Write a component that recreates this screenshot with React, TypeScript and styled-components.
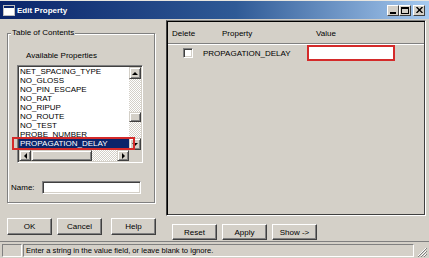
import React from "react";
import styled, { createGlobalStyle } from "styled-components";

const GlobalStyle = createGlobalStyle`
  html, body { margin: 0; padding: 0; background: #d4d0c8; }
  body {
    font-family: "Liberation Sans", Arial, sans-serif;
    font-size: 8px;
    color: #000;
  }
`;

const Window = styled.div`
  width: 429px;
  height: 258px;
  display: flex;
  flex-direction: column;
  background: #d4d0c8;
  overflow: hidden;
`;

const TitleBar = styled.div`
  height: 19px;
  box-sizing: border-box;
  display: flex;
  align-items: center;
  padding: 0 3px 0 3px;
  border-top: 1px solid #e8e6e0;
  background: linear-gradient(to right, #0a246a 0%, #2f5a96 55%, #a6caf0 100%);
`;

const TitleText = styled.span`
  flex: 1;
  margin-left: 2px;
  color: #fff;
  font-weight: bold;
  font-size: 8px;
`;

const CaptionButtons = styled.div`
  display: flex;
  margin-right: 1px;
`;

const CaptionButton = styled.div<{ $gap?: boolean }>`
  width: 12px;
  height: 11px;
  margin-left: ${(p) => (p.$gap ? "2px" : "0")};
  box-sizing: border-box;
  background: #d4d0c8;
  border-top: 1px solid #fff;
  border-left: 1px solid #fff;
  border-right: 1px solid #404040;
  border-bottom: 1px solid #404040;
  display: flex;
  align-items: center;
  justify-content: center;
`;

const Body = styled.div`
  height: 222px;
  display: flex;
`;

const LeftPane = styled.div`
  width: 166px;
  box-sizing: border-box;
  padding: 9px 0 0 7px;
  display: flex;
  flex-direction: column;
`;

const GroupBox = styled.fieldset`
  margin: 0;
  padding: 0;
  width: 148px;
  height: 175px;
  box-sizing: border-box;
  border: 1px solid #808080;
  box-shadow: inset 1px 1px 0 #fff, 1px 1px 0 #fff;
  min-inline-size: 0;
`;

const GroupTitle = styled.legend`
  margin-left: 3px;
  padding: 0 1px;
  line-height: 10px;
  background: #d4d0c8;
`;

const SmallLabel = styled.div<{ $indent: number; $top: number }>`
  margin-top: ${(p) => p.$top}px;
  padding-left: ${(p) => p.$indent}px;
  line-height: 10px;
`;

const ListWrap = styled.div`
  position: relative;
  margin: 4px 0 0 9px;
  width: 126px;
  height: 98px;
`;

const ListBox = styled.div`
  width: 100%;
  height: 100%;
  box-sizing: border-box;
  border-top: 1px solid #808080;
  border-left: 1px solid #808080;
  border-right: 1px solid #fff;
  border-bottom: 1px solid #fff;
  display: grid;
  grid-template-columns: 1fr 12px;
  grid-template-rows: 1fr 11px;
  box-shadow: inset 1px 1px 0 #404040, inset -1px -1px 0 #d4d0c8;
  padding: 1px;
`;

const Items = styled.div`
  background: #fff;
  overflow: hidden;
`;

const Item = styled.div<{ $selected?: boolean }>`
  height: 9px;
  line-height: 9px;
  padding-left: 1px;
  white-space: nowrap;
  background: ${(p) => (p.$selected ? "#0a246a" : "transparent")};
  color: ${(p) => (p.$selected ? "#fff" : "#000")};
`;

const ScrollV = styled.div`
  display: flex;
  flex-direction: column;
  background: repeating-conic-gradient(#fff 0 25%, #d4d0c8 0 50%) 0 0 / 2px 2px;
`;

const ScrollH = styled.div`
  display: flex;
  background: repeating-conic-gradient(#fff 0 25%, #d4d0c8 0 50%) 0 0 / 2px 2px;
`;

const ScrollBtn = styled.div<{ $w: number; $h: number }>`
  width: ${(p) => p.$w}px;
  height: ${(p) => p.$h}px;
  flex: none;
  box-sizing: border-box;
  background: #d4d0c8;
  border-top: 1px solid #d4d0c8;
  border-left: 1px solid #d4d0c8;
  border-right: 1px solid #404040;
  border-bottom: 1px solid #404040;
  box-shadow: inset 1px 1px 0 #fff, inset -1px -1px 0 #808080;
  display: flex;
  align-items: center;
  justify-content: center;
`;

const Spacer = styled.div<{ $size: number }>`
  flex: ${(p) => (p.$size < 0 ? "1" : `0 0 ${p.$size}px`)};
`;

const Corner = styled.div`
  background: #d4d0c8;
`;

const Highlight = styled.div`
  position: absolute;
  left: -5px;
  top: 72px;
  width: 123px;
  height: 13px;
  box-sizing: border-box;
  border: 2px solid #d42a2a;
`;

const NameRow = styled.div`
  margin-top: 18px;
  padding-left: 3px;
  display: flex;
  align-items: center;
`;

const NameLabel = styled.span`
  width: 31px;
`;

const TextField = styled.div<{ $w: number; $h: number }>`
  width: ${(p) => p.$w}px;
  height: ${(p) => p.$h}px;
  box-sizing: border-box;
  background: #fff;
  border-top: 1px solid #808080;
  border-left: 1px solid #808080;
  border-right: 1px solid #fff;
  border-bottom: 1px solid #fff;
  box-shadow: inset 1px 1px 0 #404040, inset -1px -1px 0 #d4d0c8;
`;

const ButtonRow = styled.div<{ $top: number }>`
  margin-top: ${(p) => p.$top}px;
  display: flex;
`;

const Button = styled.div<{ $w: number; $h: number; $left: number }>`
  width: ${(p) => p.$w}px;
  height: ${(p) => p.$h}px;
  margin-left: ${(p) => p.$left}px;
  box-sizing: border-box;
  background: #d4d0c8;
  border-top: 1px solid #fff;
  border-left: 1px solid #fff;
  border-right: 1px solid #404040;
  border-bottom: 1px solid #404040;
  box-shadow: inset -1px -1px 0 #808080;
  display: flex;
  align-items: center;
  justify-content: center;
`;

const RightPane = styled.div`
  flex: 1;
  padding-top: 1px;
  display: flex;
  flex-direction: column;
`;

const Table = styled.div`
  width: 260px;
  height: 196px;
  box-sizing: border-box;
  border-top: 1px solid #808080;
  border-left: 1px solid #404040;
  border-right: 1px solid #fff;
  border-bottom: 1px solid #fff;
  box-shadow: inset 1px 1px 0 #000, inset -1px -1px 0 #404040;
  padding: 1px;
  display: flex;
  flex-direction: column;
`;

const HeaderRow = styled.div`
  height: 22px;
  flex: none;
  box-sizing: border-box;
  display: flex;
  align-items: center;
  padding: 1px 0 0 4px;
  border-bottom: 1px solid #808080;
  box-shadow: 0 1px 0 #fff;
`;

const HeaderCell = styled.span<{ $w?: number }>`
  width: ${(p) => (p.$w ? `${p.$w}px` : "auto")};
`;

const DataRow = styled.div`
  height: 18px;
  display: flex;
  align-items: center;
  padding-left: 15px;
`;

const CheckBox = styled.div`
  width: 10px;
  height: 10px;
  box-sizing: border-box;
  background: #fff;
  border-top: 1px solid #808080;
  border-left: 1px solid #808080;
  border-right: 1px solid #fff;
  border-bottom: 1px solid #fff;
  box-shadow: inset 1px 1px 0 #404040, inset -1px -1px 0 #d4d0c8;
  margin-right: 10px;
`;

const PropName = styled.span`
  width: 104px;
`;

const ValueBox = styled.div`
  width: 88px;
  height: 16px;
  box-sizing: border-box;
  border: 2px solid #d42a2a;
  background: #fff;
`;

const StatusBar = styled.div`
  height: 17px;
  box-sizing: border-box;
  border-top: 1px solid #808080;
  display: flex;
  align-items: stretch;
  padding: 2px 2px 1px 2px;
  gap: 1px;
`;

const StatusPane = styled.div<{ $w?: number }>`
  ${(p) => (p.$w ? `width: ${p.$w}px;` : "flex: 1;")}
  box-sizing: border-box;
  border-top: 1px solid #808080;
  border-left: 1px solid #808080;
  border-right: 1px solid #fff;
  border-bottom: 1px solid #fff;
  display: flex;
  align-items: center;
  padding-left: 2px;
  font-size: 7.6px;
  white-space: nowrap;
`;

const Grip = styled.div`
  width: 12px;
  display: flex;
  align-items: flex-end;
  justify-content: flex-end;
`;

const Arrow = ({ dir }: { dir: "up" | "down" | "left" | "right" }) => {
  const pts = {
    up: "1,4 4,1 7,4",
    down: "1,1 4,4 7,1",
    left: "4,1 1,4 4,7",
    right: "1,1 4,4 1,7",
  }[dir];
  const vertical = dir === "up" || dir === "down";
  return (
    <svg width={vertical ? 8 : 5} height={vertical ? 5 : 8} viewBox={vertical ? "0 0 8 5" : "0 0 5 8"}>
      <polygon points={pts} fill="#000" />
    </svg>
  );
};

const items = [
  "NET_SPACING_TYPE",
  "NO_GLOSS",
  "NO_PIN_ESCAPE",
  "NO_RAT",
  "NO_RIPUP",
  "NO_ROUTE",
  "NO_TEST",
  "PROBE_NUMBER",
  "PROPAGATION_DELAY",
  "RATSNEST_SCHEDULE",
];

export default function App() {
  return (
    <>
      <GlobalStyle />
      <Window>
        <TitleBar>
          <svg width="12" height="11" viewBox="0 0 12 11">
            <rect x="0.5" y="0.5" width="11" height="10" fill="#fff" stroke="#c0c0c0" />
            <rect x="1" y="1" width="10" height="2" fill="#0a246a" />
          </svg>
          <TitleText>Edit Property</TitleText>
          <CaptionButtons>
            <CaptionButton>
              <svg width="6" height="7" viewBox="0 0 6 7">
                <rect x="0" y="5" width="6" height="2" fill="#000" />
              </svg>
            </CaptionButton>
            <CaptionButton>
              <svg width="8" height="7" viewBox="0 0 8 7">
                <rect x="0.5" y="0.5" width="7" height="6" fill="none" stroke="#000" />
                <rect x="0" y="0" width="8" height="2" fill="#000" />
              </svg>
            </CaptionButton>
            <CaptionButton $gap>
              <svg width="7" height="6" viewBox="0 0 7 6">
                <path d="M0.5 0 L6.5 6 M6.5 0 L0.5 6" stroke="#000" strokeWidth="1.4" />
              </svg>
            </CaptionButton>
          </CaptionButtons>
        </TitleBar>
        <Body>
          <LeftPane>
            <GroupBox>
              <GroupTitle>Table of Contents</GroupTitle>
              <SmallLabel $indent={18} $top={13}>Available Properties</SmallLabel>
              <ListWrap>
                <ListBox>
                  <Items>
                    {items.map((it) => (
                      <Item key={it} $selected={it === "PROPAGATION_DELAY"}>
                        {it}
                      </Item>
                    ))}
                  </Items>
                  <ScrollV>
                    <ScrollBtn $w={12} $h={12}>
                      <Arrow dir="up" />
                    </ScrollBtn>
                    <Spacer $size={33} />
                    <ScrollBtn $w={12} $h={10} />
                    <Spacer $size={-1} />
                    <ScrollBtn $w={12} $h={12}>
                      <Arrow dir="down" />
                    </ScrollBtn>
                  </ScrollV>
                  <ScrollH>
                    <ScrollBtn $w={12} $h={11}>
                      <Arrow dir="left" />
                    </ScrollBtn>
                    <ScrollBtn $w={61} $h={11} />
                    <Spacer $size={-1} />
                    <ScrollBtn $w={12} $h={11}>
                      <Arrow dir="right" />
                    </ScrollBtn>
                  </ScrollH>
                  <Corner />
                </ListBox>
                <Highlight />
              </ListWrap>
              <NameRow>
                <NameLabel>Name:</NameLabel>
                <TextField $w={99} $h={13} />
              </NameRow>
            </GroupBox>
            <ButtonRow $top={15}>
              <Button $w={45} $h={17} $left={0}>OK</Button>
              <Button $w={45} $h={17} $left={5}>Cancel</Button>
              <Button $w={45} $h={17} $left={9}>Help</Button>
            </ButtonRow>
          </LeftPane>
          <RightPane>
            <Table>
              <HeaderRow>
                <HeaderCell $w={50}>Delete</HeaderCell>
                <HeaderCell $w={94}>Property</HeaderCell>
                <HeaderCell>Value</HeaderCell>
              </HeaderRow>
              <DataRow>
                <CheckBox />
                <PropName>PROPAGATION_DELAY</PropName>
                <ValueBox />
              </DataRow>
            </Table>
            <ButtonRow $top={8}>
              <Button $w={45} $h={16} $left={6}>Reset</Button>
              <Button $w={45} $h={16} $left={5}>Apply</Button>
              <Button $w={45} $h={16} $left={5}>Show -&gt;</Button>
            </ButtonRow>
          </RightPane>
        </Body>
        <StatusBar>
          <StatusPane $w={20} />
          <StatusPane>Enter a string in the value field, or leave blank to ignore.</StatusPane>
          <Grip>
            <svg width="11" height="11" viewBox="0 0 11 11">
              <path d="M10 2 L2 10 M10 5 L5 10 M10 8 L8 10" stroke="#fff" strokeWidth="1" />
              <path d="M11 2 L2 11 M11 5 L5 11 M11 8 L8 11" stroke="#808080" strokeWidth="1" />
            </svg>
          </Grip>
        </StatusBar>
      </Window>
    </>
  );
}
